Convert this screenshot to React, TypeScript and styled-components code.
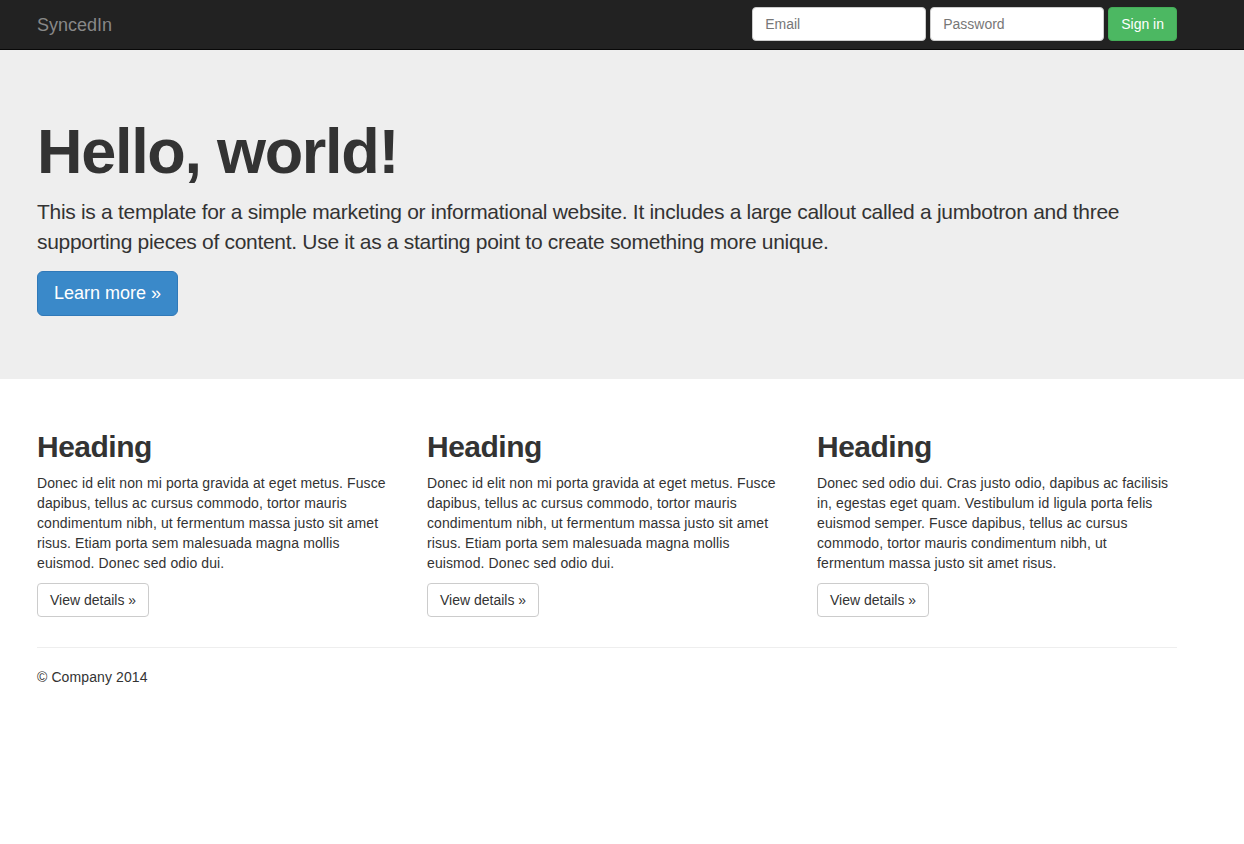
import React from "react";
import styled, { createGlobalStyle } from "styled-components";

const Global = createGlobalStyle`
  * { box-sizing: border-box; }
  html, body { margin: 0; padding: 0; background: #fff; }
  body {
    font-family: "Liberation Sans", Arial, Helvetica, sans-serif;
    font-size: 14px;
    line-height: 1.428571429;
    color: #333;
  }
`;

const Container = styled.div`
  width: 1244px;
  padding: 0 67px 0 37px;
`;

const Navbar = styled.nav`
  height: 50px;
  background: #222;
  border-bottom: 1px solid #080808;
`;

const NavInner = styled(Container)`
  display: flex;
  align-items: center;
  justify-content: space-between;
  height: 49px;
`;

const Brand = styled.a`
  font-size: 18px;
  line-height: 20px;
  color: #888;
  text-decoration: none;
`;

const SignInForm = styled.form`
  display: flex;
  gap: 4px;
  margin-top: -2px;
`;

const Input = styled.input`
  width: 174px;
  height: 34px;
  padding: 6px 12px;
  font-family: inherit;
  font-size: 14px;
  color: #555;
  background: #fff;
  border: 1px solid #ccc;
  border-radius: 4px;
  &::placeholder { color: #777; }
`;

const Button = styled.button<{ $variant: "primary" | "success" | "default"; $size?: "lg" }>`
  font-family: inherit;
  cursor: pointer;
  border: 1px solid transparent;
  border-radius: ${(p) => (p.$size === "lg" ? "6px" : "4px")};
  padding: ${(p) => (p.$size === "lg" ? "10px 16px 9px" : "6px 12px")};
  font-size: ${(p) => (p.$size === "lg" ? "18px" : "14px")};
  line-height: ${(p) => (p.$size === "lg" ? "1.33" : "1.428571429")};
  background: ${(p) =>
    p.$variant === "primary" ? "#3a89c9" : p.$variant === "success" ? "#4cb862" : "#fff"};
  border-color: ${(p) =>
    p.$variant === "primary" ? "#3079b8" : p.$variant === "success" ? "#44ad58" : "#ccc"};
  color: ${(p) => (p.$variant === "default" ? "#333" : "#fff")};
`;

const Jumbotron = styled.section`
  background: #eee;
  padding: 48px 0;
  margin-bottom: 31px;
`;

const Title = styled.h1`
  font-size: 63px;
  line-height: 1.1;
  font-weight: 700;
  margin: 19px 0 11px;
  color: #333;
  letter-spacing: -1.3px;
`;

const Lead = styled.p`
  font-size: 21px;
  font-weight: 400;
  line-height: 30px;
  margin: 0 0 14px;
  color: #333;
  letter-spacing: -0.3px;
`;

const Actions = styled.p`
  margin: 0 0 15px;
`;

const Row = styled.div`
  display: grid;
  grid-template-columns: repeat(3, 360px);
  column-gap: 30px;
`;

const Column = styled.div``;

const Heading = styled.h2`
  font-size: 30px;
  line-height: 1.1;
  font-weight: 700;
  margin: 20px 0 10px;
  color: #333;
  letter-spacing: -0.5px;
`;

const Text = styled.p`
  margin: 0 0 10px;
  letter-spacing: 0.1px;
`;

const Rule = styled.hr`
  margin: 20px 0 19px;
  border: 0;
  border-top: 1px solid #eee;
`;

const Footer = styled.footer``;

const cols = [
  "Donec id elit non mi porta gravida at eget metus. Fusce dapibus, tellus ac cursus commodo, tortor mauris condimentum nibh, ut fermentum massa justo sit amet risus. Etiam porta sem malesuada magna mollis euismod. Donec sed odio dui.",
  "Donec id elit non mi porta gravida at eget metus. Fusce dapibus, tellus ac cursus commodo, tortor mauris condimentum nibh, ut fermentum massa justo sit amet risus. Etiam porta sem malesuada magna mollis euismod. Donec sed odio dui.",
  "Donec sed odio dui. Cras justo odio, dapibus ac facilisis in, egestas eget quam. Vestibulum id ligula porta felis euismod semper. Fusce dapibus, tellus ac cursus commodo, tortor mauris condimentum nibh, ut fermentum massa justo sit amet risus.",
];

export default function App() {
  return (
    <>
      <Global />
      <Navbar>
        <NavInner>
          <Brand href="#">SyncedIn</Brand>
          <SignInForm onSubmit={(e) => e.preventDefault()}>
            <Input type="text" placeholder="Email" />
            <Input type="password" placeholder="Password" />
            <Button $variant="success" type="submit">Sign in</Button>
          </SignInForm>
        </NavInner>
      </Navbar>
      <Jumbotron>
        <Container>
          <Title>Hello, world!</Title>
          <Lead>
            This is a template for a simple marketing or informational website. It includes a large callout called a
            jumbotron and three supporting pieces of content. Use it as a starting point to create something more unique.
          </Lead>
          <Actions>
            <Button $variant="primary" $size="lg">Learn more »</Button>
          </Actions>
        </Container>
      </Jumbotron>
      <Container>
        <Row>
          {cols.map((c, i) => (
            <Column key={i}>
              <Heading>Heading</Heading>
              <Text>{c}</Text>
              <Text>
                <Button $variant="default">View details »</Button>
              </Text>
            </Column>
          ))}
        </Row>
        <Rule />
        <Footer>
          <Text>© Company 2014</Text>
        </Footer>
      </Container>
    </>
  );
}
